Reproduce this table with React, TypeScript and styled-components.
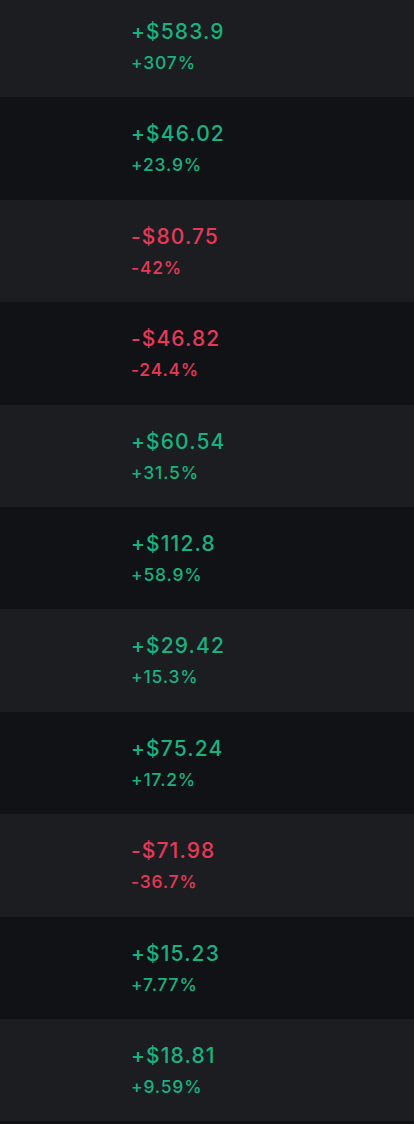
import React from "react";
import styled, { createGlobalStyle } from "styled-components";

const Global = createGlobalStyle`
  html, body { margin: 0; padding: 0; background: #111216; }
  body { font-family: "Inter", "Noto Sans", sans-serif; }
`;

const List = styled.div`
  display: flex;
  flex-direction: column;
  margin-top: -5px;
`;

const Row = styled.div<{ $alt: boolean }>`
  height: 102.4px;
  box-sizing: border-box;
  background: ${(p) => (p.$alt ? "#111216" : "#1c1d21")};
  padding: 25px 0 0 131px;
  display: flex;
  flex-direction: column;
  gap: 9px;
`;

const Amount = styled.div<{ $up: boolean }>`
  font-size: 21px;
  line-height: 24px;
  font-weight: 500;
  letter-spacing: 1.1px;
  color: ${(p) => (p.$up ? "#17b27f" : "#e6395a")};
`;

const Pct = styled.div<{ $up: boolean }>`
  font-size: 17.5px;
  line-height: 20px;
  font-weight: 500;
  letter-spacing: 0.8px;
  color: ${(p) => (p.$up ? "#17b27f" : "#e6395a")};
`;

const data: [string, string][] = [
  ["+$583.9", "+307%"],
  ["+$46.02", "+23.9%"],
  ["-$80.75", "-42%"],
  ["-$46.82", "-24.4%"],
  ["+$60.54", "+31.5%"],
  ["+$112.8", "+58.9%"],
  ["+$29.42", "+15.3%"],
  ["+$75.24", "+17.2%"],
  ["-$71.98", "-36.7%"],
  ["+$15.23", "+7.77%"],
  ["+$18.81", "+9.59%"],
];

export default function App() {
  return (
    <>
      <Global />
      <List>
        {data.map(([a, p], i) => {
          const up = a.startsWith("+");
          return (
            <Row key={i} $alt={i % 2 === 1}>
              <Amount $up={up}>{a}</Amount>
              <Pct $up={up}>{p}</Pct>
            </Row>
          );
        })}
      </List>
    </>
  );
}
